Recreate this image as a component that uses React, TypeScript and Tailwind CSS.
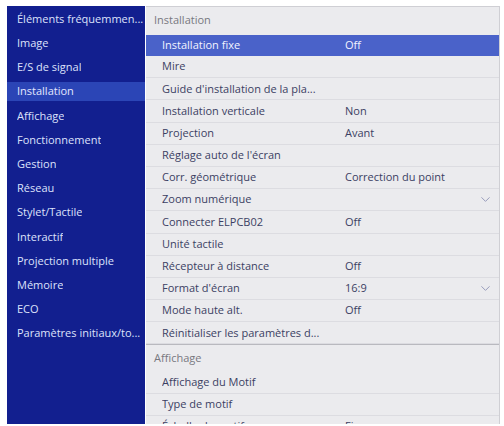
import React from "react";
import { ChevronDown } from "lucide-react";

const categories = [
  "Éléments fréquemmen...",
  "Image",
  "E/S de signal",
  "Installation",
  "Affichage",
  "Fonctionnement",
  "Gestion",
  "Réseau",
  "Stylet/Tactile",
  "Interactif",
  "Projection multiple",
  "Mémoire",
  "ECO",
  "Paramètres initiaux/to...",
];

type Row = { label: string; value?: string; more?: boolean; active?: boolean };

const installation: Row[] = [
  { label: "Installation fixe", value: "Off", active: true },
  { label: "Mire" },
  { label: "Guide d'installation de la pla..." },
  { label: "Installation verticale", value: "Non" },
  { label: "Projection", value: "Avant" },
  { label: "Réglage auto de l'écran" },
  { label: "Corr. géométrique", value: "Correction du point" },
  { label: "Zoom numérique", more: true },
  { label: "Connecter ELPCB02", value: "Off" },
  { label: "Unité tactile" },
  { label: "Récepteur à distance", value: "Off" },
  { label: "Format d'écran", value: "16:9", more: true },
  { label: "Mode haute alt.", value: "Off" },
  { label: "Réinitialiser les paramètres d..." },
];

const affichage: Row[] = [
  { label: "Affichage du Motif" },
  { label: "Type de motif" },
  { label: "Échelle de motif", value: "Fixe" },
];

function MenuRow({ row }: { row: Row }) {
  return (
    <div
      className={
        row.active
          ? "flex h-[21px] shrink-0 items-center bg-[#4a62c9] pl-[16px] text-[#f2f4ff]"
          : "flex h-[22.2px] shrink-0 items-center border-b border-[#dcdce1] pl-[16px] text-[#3b3f63]"
      }
    >
      <span className="w-[183px] truncate">{row.label}</span>
      <span className="flex-1">{row.value}</span>
      {row.more && <ChevronDown size={15} strokeWidth={1.4} className="mr-[6px] text-[#8c90b4]" />}
    </div>
  );
}

function SectionHeader({ title, tall }: { title: string; tall?: boolean }) {
  return (
    <div className={`flex shrink-0 items-center pl-[8px] text-[#78787f] ${tall ? "h-[28px] pb-[2px]" : "h-[26px]"}`}>
      {title}
    </div>
  );
}

export default function App() {
  return (
    <div className="h-[426px] w-[504px] bg-white pl-[7px] pt-[6px]" style={{ fontFamily: '"Open Sans", sans-serif' }}>
      <div className="flex h-[418px] w-[493px] overflow-hidden text-[11px]">
        <div className="flex w-[138px] shrink-0 flex-col bg-[#121f8f] pt-[1px]">
          {categories.map((c) => (
            <div key={c} className="flex h-[24.2px] shrink-0 items-center">
              <div
                className={`flex h-[19px] w-full items-center pl-[10px] ${
                  c === "Installation" ? "bg-[#2b45b6] text-[#e4e8ff]" : "text-[#dde2fb]"
                }`}
              >
                <span className="truncate">{c}</span>
              </div>
            </div>
          ))}
        </div>
        <div className="ml-[1px] flex flex-1 flex-col border-r border-t border-[#cfcfd4] bg-[#ebebee]">
          <SectionHeader title="Installation" tall />
          {installation.map((r) => (
            <MenuRow key={r.label} row={r} />
          ))}
          <div className="shrink-0 border-t border-[#b9b9bf]" />
          <SectionHeader title="Affichage" />
          {affichage.map((r) => (
            <MenuRow key={r.label} row={r} />
          ))}
        </div>
      </div>
    </div>
  );
}
